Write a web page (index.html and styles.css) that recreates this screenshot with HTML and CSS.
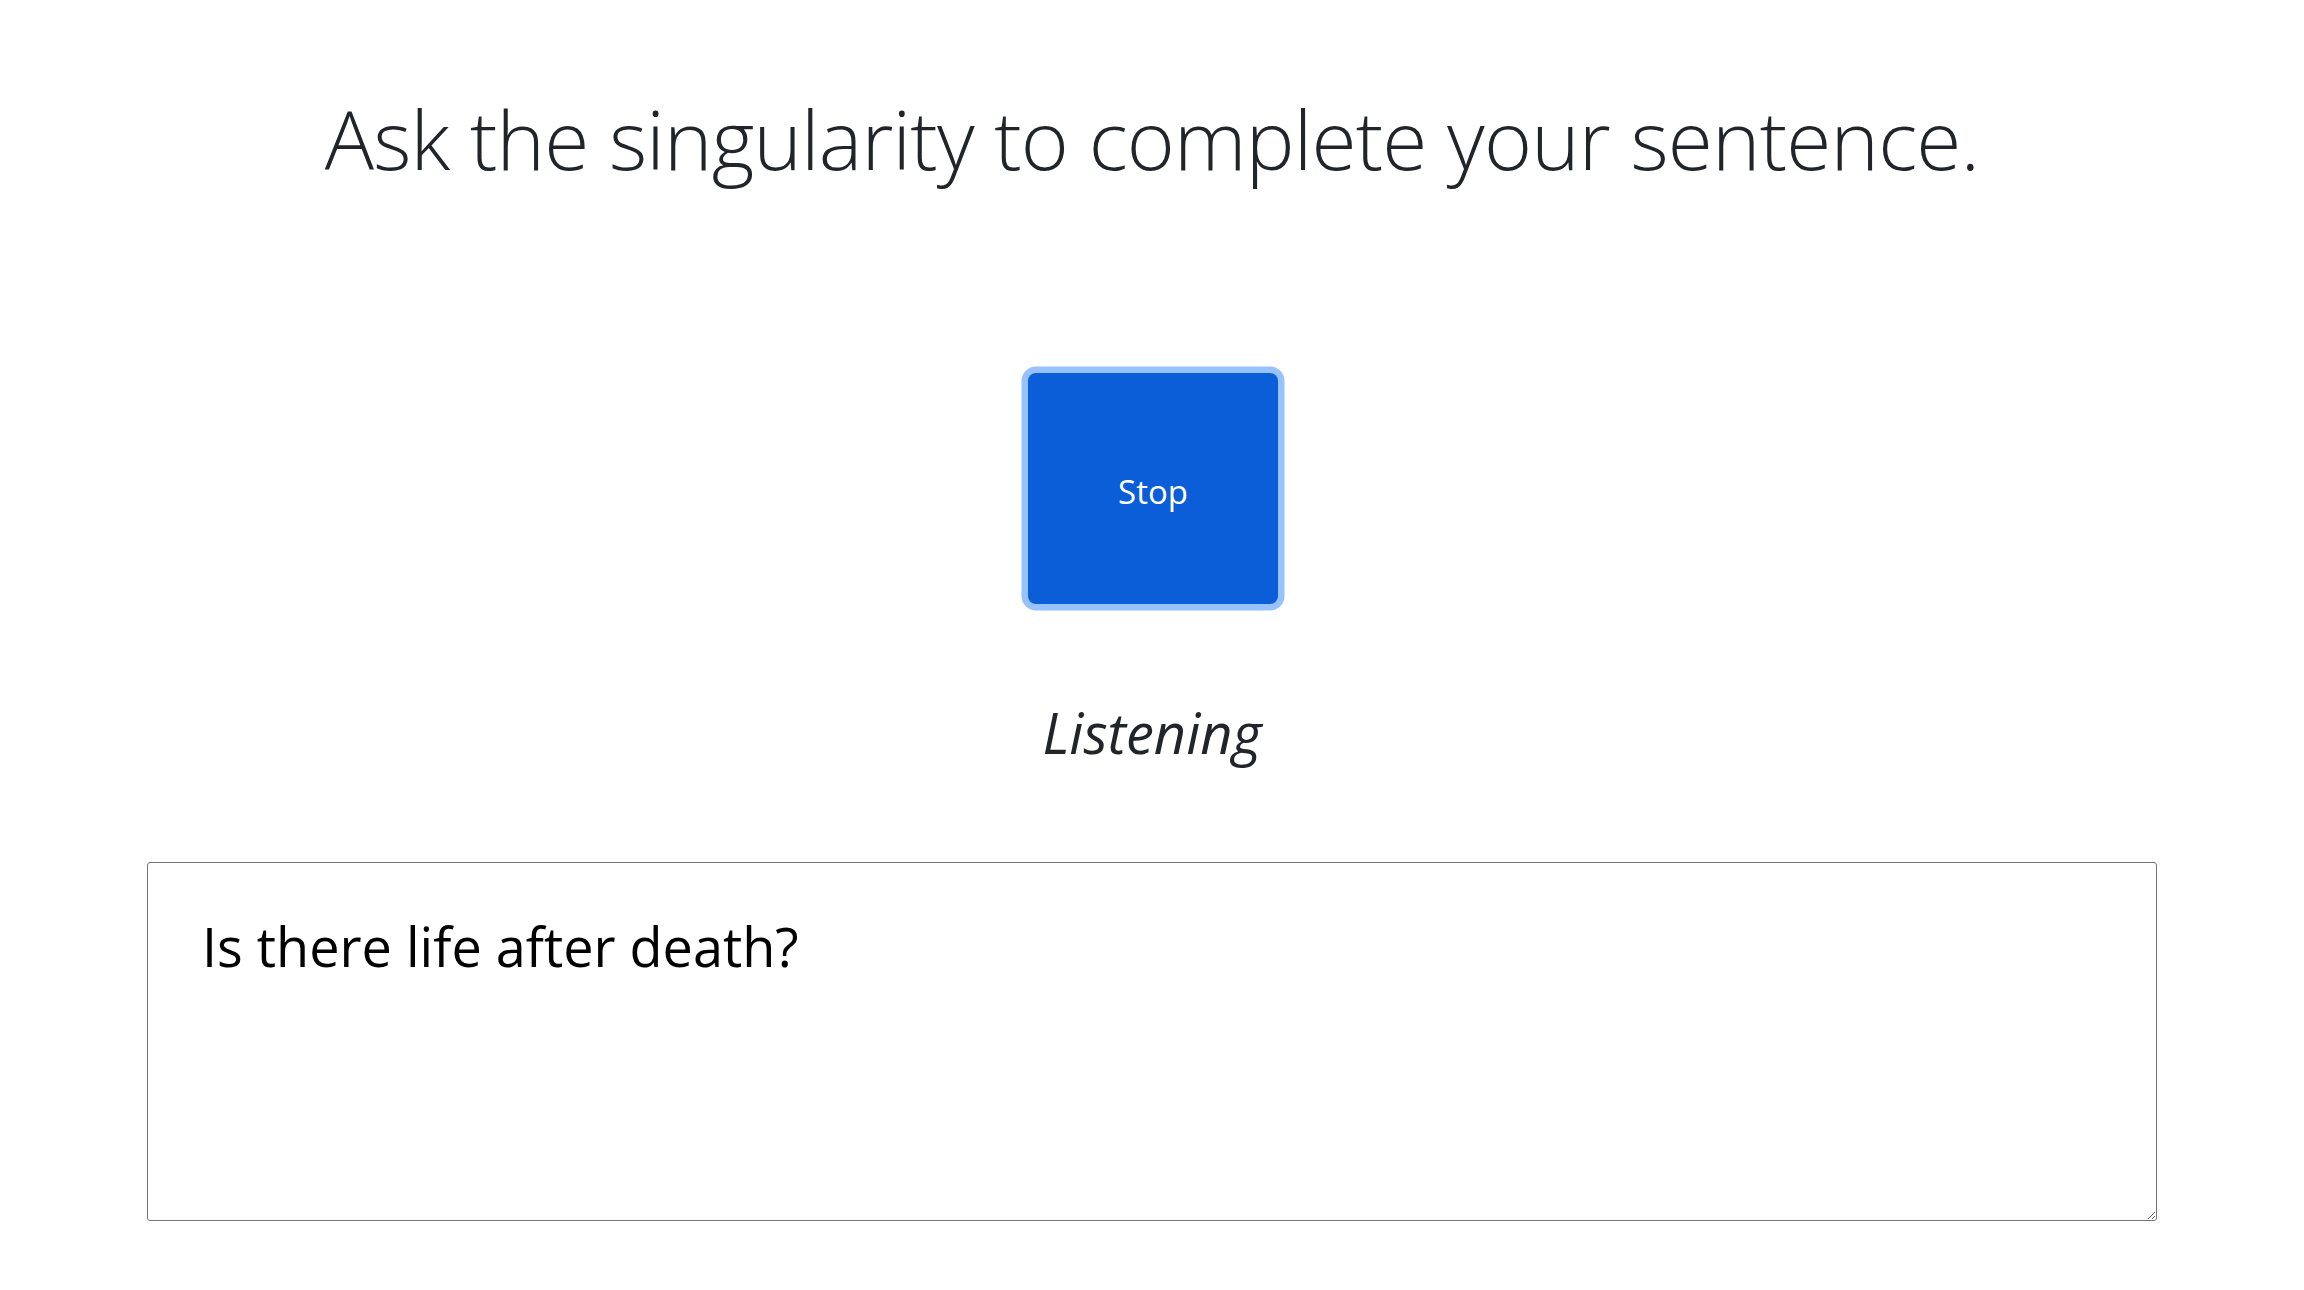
FILE: index.html
```html
<!DOCTYPE html>
<html lang="en">
<head>
<meta charset="utf-8">
<title>Complete your sentence</title>
<link rel="stylesheet" href="styles.css">
</head>
<body>
<main class="page">
  <h1 class="title">Ask the singularity to complete your sentence.</h1>
  <button class="stop-btn" type="button">Stop</button>
  <p class="status">Listening</p>
  <textarea class="prompt">Is there life after death?</textarea>
</main>
</body>
</html>
```

FILE: styles.css
```css
html, body {
  margin: 0;
  padding: 0;
  background: #ffffff;
}

body {
  font-family: "Open Sans", "Noto Sans", "Liberation Sans", sans-serif;
  color: #212529;
}

.page {
  display: flex;
  flex-direction: column;
  align-items: center;
  padding: 0 147px;
}

.title {
  margin: 88px 0 0;
  font-size: 82px;
  font-weight: 300;
  line-height: 100px;
  letter-spacing: -0.8px;
  text-align: center;
  white-space: nowrap;
}

.stop-btn {
  margin: 185px 0 0 2px;
  width: 250px;
  height: 231px;
  border: none;
  border-radius: 8px;
  background: #0b5ed7;
  color: #ffffff;
  font-family: "Open Sans", "Noto Sans", sans-serif;
  font-size: 33px;
  font-weight: 400;
  box-shadow: 0 0 0 6.5px #98c2fd;
  padding: 6px 0 0;
}

.status {
  margin: 95px 0 0;
  font-size: 56px;
  font-style: italic;
  line-height: 66px;
}

.prompt {
  margin-top: 97px;
  box-sizing: border-box;
  width: 100%;
  height: 359px;
  border: 1px solid #767676;
  border-radius: 3px;
  padding: 48px 54px 32px;
  font-family: "Open Sans", "Noto Sans", sans-serif;
  font-size: 54px;
  line-height: 1.3;
  color: #000000;
  background: #ffffff;
}
```
